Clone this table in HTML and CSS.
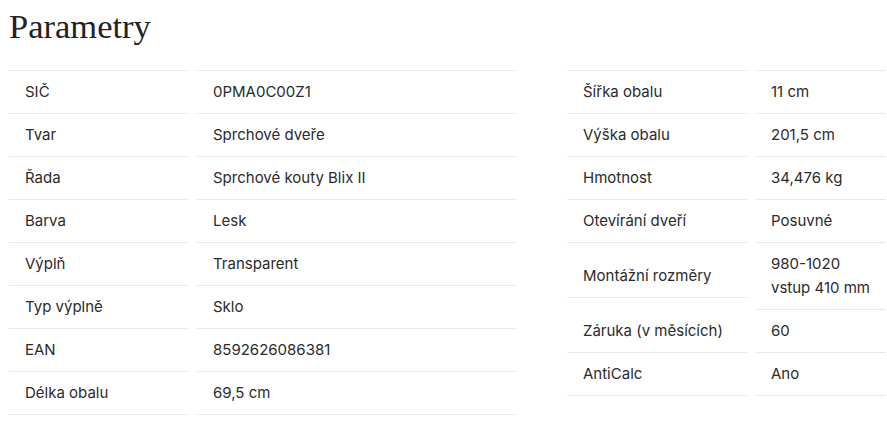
FILE: index.html
```html
<!DOCTYPE html>
<html lang="cs">
<head>
<meta charset="utf-8">
<title>Parametry</title>
<link rel="stylesheet" href="styles.css">
</head>
<body>
<main class="page">
  <h2 class="title">Parametry</h2>
  <div class="columns">
    <dl class="params params-left">
      <div class="row"><dt class="cell label">SIČ</dt><dd class="cell value">0PMA0C00Z1</dd></div>
      <div class="row"><dt class="cell label">Tvar</dt><dd class="cell value">Sprchové dveře</dd></div>
      <div class="row"><dt class="cell label">Řada</dt><dd class="cell value">Sprchové kouty Blix II</dd></div>
      <div class="row"><dt class="cell label">Barva</dt><dd class="cell value">Lesk</dd></div>
      <div class="row"><dt class="cell label">Výplň</dt><dd class="cell value">Transparent</dd></div>
      <div class="row"><dt class="cell label">Typ výplně</dt><dd class="cell value">Sklo</dd></div>
      <div class="row"><dt class="cell label">EAN</dt><dd class="cell value">8592626086381</dd></div>
      <div class="row"><dt class="cell label">Délka obalu</dt><dd class="cell value">69,5 cm</dd></div>
    </dl>
    <dl class="params params-right">
      <div class="row"><dt class="cell label">Šířka obalu</dt><dd class="cell value">11 cm</dd></div>
      <div class="row"><dt class="cell label">Výška obalu</dt><dd class="cell value">201,5 cm</dd></div>
      <div class="row"><dt class="cell label">Hmotnost</dt><dd class="cell value">34,476 kg</dd></div>
      <div class="row"><dt class="cell label">Otevírání dveří</dt><dd class="cell value">Posuvné</dd></div>
      <div class="row"><dt class="cell label">Montážní rozměry</dt><dd class="cell value">980-1020<br>vstup 410 mm</dd></div>
      <div class="row"><dt class="cell label">Záruka (v měsících)</dt><dd class="cell value">60</dd></div>
      <div class="row"><dt class="cell label">AntiCalc</dt><dd class="cell value">Ano</dd></div>
    </dl>
  </div>
</main>
</body>
</html>
```
FILE: styles.css
```css
html, body {
  margin: 0;
  padding: 0;
  background: #ffffff;
}

.page {
  padding: 6px 0 0 9px;
  font-family: Inter, "Liberation Sans", sans-serif;
  color: #2b2b2b;
}

.title {
  margin: 0 0 24px 0;
  font-family: "Liberation Serif", "Times New Roman", serif;
  font-weight: 400;
  font-size: 34.5px;
  line-height: 40px;
  color: #222222;
}

.columns {
  display: grid;
  grid-template-columns: 508px 320px;
  column-gap: 50px;
  align-items: start;
}

.params {
  margin: 0;
}

.row {
  display: grid;
  column-gap: 8px;
  align-items: center;
}

.params-left .row {
  grid-template-columns: 180px 320px;
}

.params-right .row {
  grid-template-columns: 180px 131px;
}

.cell {
  margin: 0;
  padding: 9px 16px;
  font-size: 15px;
  line-height: 24px;
  border-bottom: 1px solid #e9e9e9;
}

.row:first-child .cell {
  border-top: 1px solid #e9e9e9;
}

.label {
  font-weight: 400;
}
```
